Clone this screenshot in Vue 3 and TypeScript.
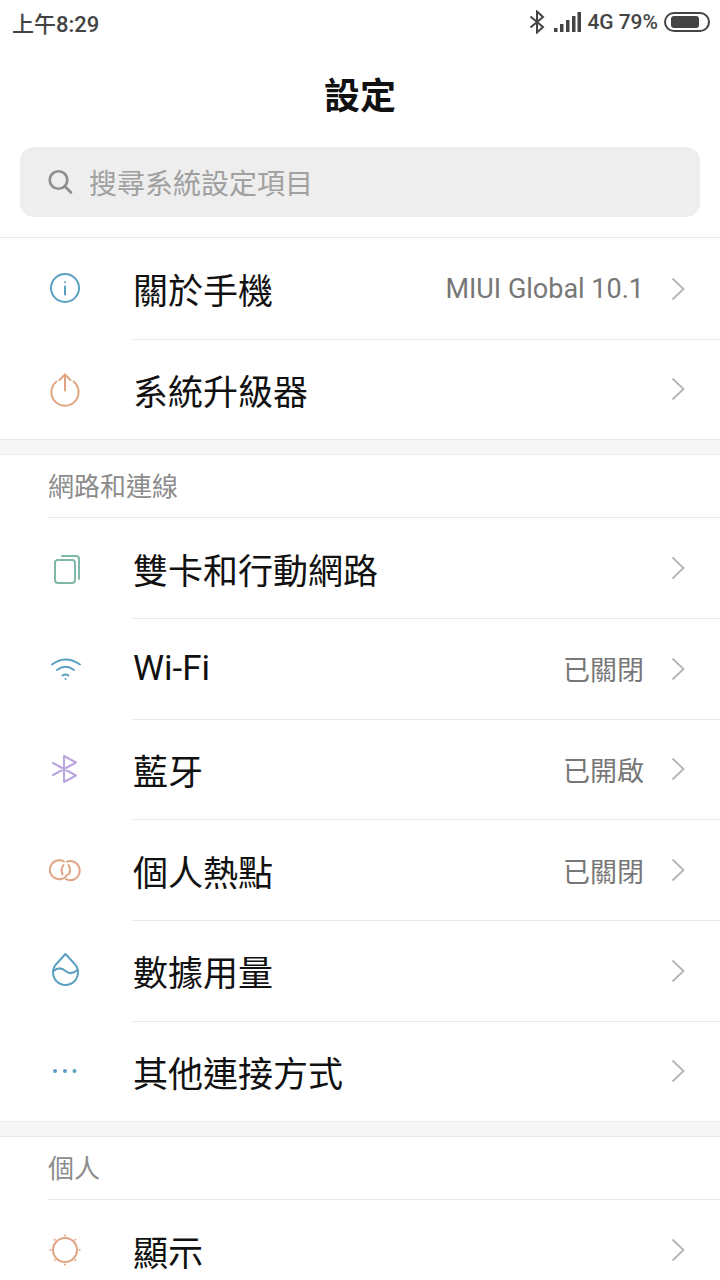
<script setup lang="ts">
interface Row {
  label: string
  value?: string
  color: string
  paths: string[]
  wide?: boolean
}

interface Group {
  title?: string
  rows: Row[]
}

const sunTicks = [0, 45, 90, 135, 180, 225, 270, 315].map((deg) => {
  const a = (deg * Math.PI) / 180
  const x = (18 + Math.cos(a) * 14.6).toFixed(1)
  const y = (18 + Math.sin(a) * 14.6).toFixed(1)
  return `M${x} ${y}h.01`
})

const groups: Group[] = [
  {
    rows: [
      {
        label: '關於手機',
        value: 'MIUI Global 10.1',
        color: '#5aa0c0',
        paths: ['M18 4a14 14 0 1 0 0 28a14 14 0 1 0 0-28z', 'M18 16.5v8', 'M18 12.2h.01'],
      },
      {
        label: '系統升級器',
        color: '#e0a482',
        paths: ['M9.5 10.5a13.6 13.6 0 1 0 17 0', 'M18 3.5v16', 'M12.5 9L18 3.5L23.5 9'],
      },
    ],
  },
  {
    title: '網路和連線',
    rows: [
      {
        label: '雙卡和行動網路',
        color: '#7fb8a8',
        paths: [
          'M10.5 10H25a3 3 0 0 1 3 3v17a3 3 0 0 1-3 3H11a3 3 0 0 1-3-3V13a3 3 0 0 1 2.500-3z',
          'M15 6h14a3 3 0 0 1 3 3v20',
        ],
      },
      {
        label: 'Wi-Fi',
        value: '已關閉',
        color: '#5aa0c0',
        paths: ['M5 14.500Q18.500 4.500 33 14.500', 'M10 20Q18.500 13.500 27 20', 'M15.500 25.500Q18.500 23.500 21.500 25.500', 'M18.500 29h.01'],
      },
      {
        label: '藍牙',
        value: '已開啟',
        color: '#bba4e0',
        paths: ['M6 24L29 11.500L17 5V31L29 24.500L6 12'],
      },
      {
        label: '個人熱點',
        value: '已關閉',
        color: '#e0a482',
        paths: [
          'M17 9.500a9.500 9.500 0 1 0 3.500 13',
          'M16.500 13a9.500 9.500 0 0 0-1 9.500',
          'M19 27.200a9.500 9.500 0 1 0 1-17.500',
          'M21.500 13a9.500 9.500 0 0 1 .5 9',
        ],
      },
      {
        label: '數據用量',
        color: '#5aa0c0',
        paths: [
          'M18.500 2L9.800 11.500a12.500 12.500 0 1 0 17.400 0z',
          'M6.500 19C11 15 15 16 18.500 19S26 22 30.500 18',
        ],
      },
      {
        label: '其他連接方式',
        color: '#5aa0c0',
        wide: true,
        paths: ['M8 18h.01', 'M18 18h.01', 'M27.500 18h.01'],
      },
    ],
  },
  {
    title: '個人',
    rows: [
      {
        label: '顯示',
        color: '#e0a482',
        paths: ['M18 6a12 12 0 1 0 0 24a12 12 0 1 0 0-24z', ...sunTicks],
      },
    ],
  },
]
</script>

<template>
  <div class="page">
    <header class="status">
      <span class="clock">上午8:29</span>
      <div class="status-right">
        <svg class="st-bt" width="16" height="24" viewBox="0 0 16 24" fill="none" stroke="#444" stroke-width="2">
          <path d="M1.500 6.500L14 17L8 22.500V1.500L14 7L1.500 17.500" />
        </svg>
        <svg class="st-signal" width="27" height="22" viewBox="0 0 27 22" fill="#444">
          <rect x="0" y="17" width="3.500" height="4" />
          <rect x="6" y="13" width="3.500" height="8" />
          <rect x="12" y="9" width="3.500" height="12" />
          <rect x="18" y="5" width="3.500" height="16" />
          <rect x="23.500" y="1" width="3.500" height="20" />
        </svg>
        <span class="st-text">4G</span>
        <span class="st-text">79%</span>
        <div class="battery"><div class="battery-fill"></div></div>
      </div>
    </header>

    <h1 class="title">設定</h1>

    <div class="search">
      <svg width="28" height="28" viewBox="0 0 28 28" fill="none" stroke="#8e8e8e" stroke-width="2.600">
        <circle cx="11.500" cy="12" r="8.800" />
        <path d="M18 18.500L24 24.500" stroke-linecap="round" />
      </svg>
      <span>搜尋系統設定項目</span>
    </div>

    <template v-for="(group, g) in groups" :key="g">
      <div v-if="g > 0" class="gap"></div>
      <div v-if="group.title" class="section">{{ group.title }}</div>
      <ul class="list" :class="{ first: g === 0 }">
        <li v-for="(row, r) in group.rows" :key="row.label" class="row" :class="{ lined: r > 0, titled: r === 0 && group.title }">
          <svg class="icon" width="36" height="36" viewBox="0 0 36 36" fill="none" :stroke="row.color" :stroke-width="row.wide ? 4 : 2" stroke-linecap="round" stroke-linejoin="round">
            <path v-for="d in row.paths" :key="d" :d="d" />
          </svg>
          <div class="row-body">
            <span class="label">{{ row.label }}</span>
            <span v-if="row.value" class="value">{{ row.value }}</span>
            <svg class="chevron" width="14" height="24" viewBox="0 0 14 24" fill="none" stroke="#b4b4b4" stroke-width="1.800">
              <path d="M1.500 1.500L12.500 12L1.500 22.500" />
            </svg>
          </div>
        </li>
      </ul>
    </template>
  </div>
</template>

<style>
html,
body {
  background: #fff;
}
</style>

<style scoped>
.page {
  width: 720px;
  height: 1280px;
  overflow: hidden;
  background: #fff;
  font-family: Roboto, "Noto Sans CJK TC", sans-serif;
  color: #111;
}

.status {
  height: 44px;
  display: flex;
  align-items: center;
  justify-content: space-between;
  padding: 0 10px 0 12px;
  color: #444;
}
.clock {
  font-size: 22px;
  font-weight: 500;
}
.status-right {
  display: flex;
  align-items: center;
}
.st-bt {
  margin-right: 9px;
}
.st-signal {
  margin-right: 6px;
}
.st-text {
  font-size: 21px;
  font-weight: 500;
  margin-right: 5px;
}
.battery {
  width: 46px;
  height: 20px;
  box-sizing: border-box;
  border: 2px solid #444;
  border-radius: 10px;
  padding: 2px 3px;
  margin-left: 1px;
}
.battery-fill {
  width: 79%;
  height: 100%;
  margin-left: 2px;
  background: #444;
  border-radius: 3px;
}

.title {
  margin: 0;
  height: 103px;
  line-height: 106px;
  text-align: center;
  font-size: 36px;
  font-weight: 700;
}

.search {
  height: 70px;
  margin: 0 20px 20px;
  padding-left: 27px;
  display: flex;
  align-items: center;
  gap: 14px;
  background: #eeeeee;
  border-radius: 14px;
  font-size: 28px;
  color: #a0a0a0;
}

.gap {
  height: 16px;
  box-sizing: border-box;
  background: #f6f6f6;
  border-top: 1px solid #e8e8e8;
  border-bottom: 1px solid #e8e8e8;
}

.section {
  height: 62px;
  box-sizing: border-box;
  padding: 15px 0 0 48px;
  font-size: 26px;
  line-height: 35px;
  color: #8c8c8c;
}

.list {
  list-style: none;
  margin: 0;
  padding: 0;
}
.list.first {
  border-top: 1px solid #e8e8e8;
}

.row {
  height: 100.670px;
  box-sizing: border-box;
  display: flex;
  align-items: center;
}
.icon {
  flex: none;
  width: 36px;
  margin-left: 47px;
  margin-right: 50px;
}
.row-body {
  flex: 1;
  align-self: stretch;
  display: flex;
  align-items: center;
  padding-right: 35px;
  border-top: 1px solid transparent;
}
.row.lined .row-body {
  border-top-color: #e8e8e8;
}
.row.titled {
  position: relative;
}
/* the first row under a section title has its rule start at the title's edge */
.row.titled::before {
  content: "";
  position: absolute;
  left: 47px;
  right: 0;
  height: 1px;
  margin-top: -100px;
  background: #e8e8e8;
}
.label {
  font-size: 35px;
  color: #111;
  flex: 1;
}
.value {
  font-size: 27px;
  color: #777;
  margin-right: 27px;
}
.chevron {
  flex: none;
}
</style>
